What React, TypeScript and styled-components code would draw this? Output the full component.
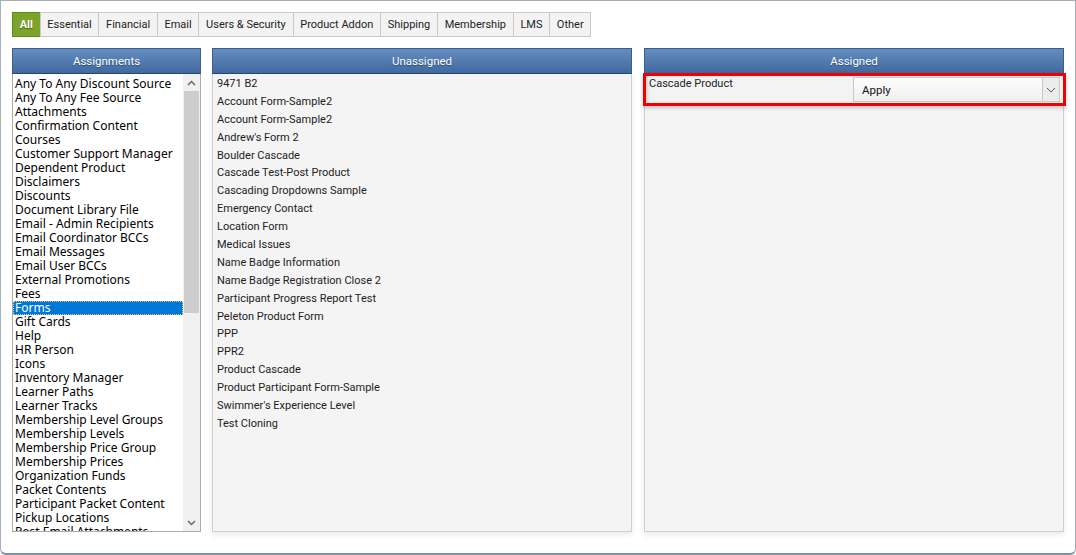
import styled, { createGlobalStyle } from "styled-components";

const tabs = [
  "All",
  "Essential",
  "Financial",
  "Email",
  "Users & Security",
  "Product Addon",
  "Shipping",
  "Membership",
  "LMS",
  "Other",
];

const assignments = [
  "Any To Any Discount Source",
  "Any To Any Fee Source",
  "Attachments",
  "Confirmation Content",
  "Courses",
  "Customer Support Manager",
  "Dependent Product",
  "Disclaimers",
  "Discounts",
  "Document Library File",
  "Email - Admin Recipients",
  "Email Coordinator BCCs",
  "Email Messages",
  "Email User BCCs",
  "External Promotions",
  "Fees",
  "Forms",
  "Gift Cards",
  "Help",
  "HR Person",
  "Icons",
  "Inventory Manager",
  "Learner Paths",
  "Learner Tracks",
  "Membership Level Groups",
  "Membership Levels",
  "Membership Price Group",
  "Membership Prices",
  "Organization Funds",
  "Packet Contents",
  "Participant Packet Content",
  "Pickup Locations",
  "Post Email Attachments",
];

const unassigned = [
  "9471 B2",
  "Account Form-Sample2",
  "Account Form-Sample2",
  "Andrew's Form 2",
  "Boulder Cascade",
  "Cascade Test-Post Product",
  "Cascading Dropdowns Sample",
  "Emergency Contact",
  "Location Form",
  "Medical Issues",
  "Name Badge Information",
  "Name Badge Registration Close 2",
  "Participant Progress Report Test",
  "Peleton Product Form",
  "PPP",
  "PPR2",
  "Product Cascade",
  "Product Participant Form-Sample",
  "Swimmer's Experience Level",
  "Test Cloning",
];

const App = () => {
  return (
    <>
      <GlobalStyle />
      <Window>
        <TabBar>
          {tabs.map((t, i) => (
            <Tab key={t} active={i === 0}>
              {t}
            </Tab>
          ))}
        </TabBar>
        <Columns>
          <Column width={189}>
            <Header>Assignments</Header>
            <ListBox>
              <ListItems>
                {assignments.map((a) => (
                  <ListItem key={a} selected={a === "Forms"}>
                    {a}
                  </ListItem>
                ))}
              </ListItems>
              <ScrollBar>
                <Arrow>
                  <svg width="9" height="6" viewBox="0 0 9 6">
                    <polyline points="1,5 4.5,1.5 8,5" fill="none" stroke="#606060" strokeWidth="1.4" />
                  </svg>
                </Arrow>
                <Track>
                  <Thumb />
                </Track>
                <Arrow>
                  <svg width="9" height="6" viewBox="0 0 9 6">
                    <polyline points="1,1 4.5,4.5 8,1" fill="none" stroke="#606060" strokeWidth="1.4" />
                  </svg>
                </Arrow>
              </ScrollBar>
            </ListBox>
          </Column>
          <Column width={420}>
            <Header>Unassigned</Header>
            <Body>
              {unassigned.map((u, i) => (
                <Entry key={u + i}>{u}</Entry>
              ))}
            </Body>
          </Column>
          <Column width={420}>
            <Header>Assigned</Header>
            <Body>
              <AssignedRow>
                <RowLabel>Cascade Product</RowLabel>
                <SelectBox>
                  <SelectText>Apply</SelectText>
                  <SelectButton>
                    <svg width="10" height="6" viewBox="0 0 10 6">
                      <polyline points="1,1 5,5 9,1" fill="none" stroke="#555" strokeWidth="1" />
                    </svg>
                  </SelectButton>
                </SelectBox>
              </AssignedRow>
            </Body>
          </Column>
        </Columns>
      </Window>
    </>
  );
};

export default App;

const GlobalStyle = createGlobalStyle`
  body {
    margin: 0;
    background: #ffffff;
    font-family: Roboto, "Liberation Sans", sans-serif;
  }
`;

const Window = styled.div`
  width: 1076px;
  height: 555px;
  box-sizing: border-box;
  border: 1px solid #a8abb0;
  border-bottom: 2px solid #7c8ea8;
  border-left-color: #a8b0bc;
  border-radius: 0 0 6px 6px;
  padding: 11px 11px 0 11px;
  background: #fff;
  overflow: hidden;
`;

const TabBar = styled.div`
  display: flex;
  height: 25px;
  margin-bottom: 11px;
`;

const Tab = styled.div<{ active?: boolean }>`
  display: flex;
  align-items: center;
  padding: 0 6.7px;
  font-size: 11px;
  color: ${({ active }) => (active ? "#fff" : "#222")};
  font-weight: ${({ active }) => (active ? 700 : 400)};
  text-shadow: ${({ active }) => (active ? "0 1px 1px #3c5a10" : "none")};
  background: ${({ active }) => (active ? "#7ca42b" : "#f3f3f3")};
  border: 1px solid ${({ active }) => (active ? "#5d8a1c" : "#c9c9c9")};
  margin-left: -1px;
  &:first-child {
    margin-left: 0;
  }
`;

const Columns = styled.div`
  display: flex;
  gap: 11px;
  height: 484px;
`;

const Column = styled.div<{ width: number }>`
  width: ${({ width }) => width}px;
  display: flex;
  flex-direction: column;
  height: 484px;
  & + & + & {
    margin-left: 1px;
  }
`;

const Header = styled.div`
  height: 26px;
  box-sizing: border-box;
  display: flex;
  align-items: center;
  justify-content: center;
  color: #fff;
  font-size: 11.5px;
  text-shadow: 0 1px 1px rgba(0, 0, 0, 0.35);
  background: linear-gradient(#648dc0, #3f69a0);
  border: 1px solid #3a5d8a;
  border-bottom: 1px solid #26466f;
  position: relative;
  z-index: 0;
`;

const ListBox = styled.div`
  flex: 1;
  display: flex;
  border: 1px solid #ababab;
  border-top: none;
  background: #fff;
  overflow: hidden;
`;

const ListItems = styled.div`
  flex: 1;
  padding-top: 3px;
  overflow: hidden;
`;

const ListItem = styled.div<{ selected?: boolean }>`
  height: 14px;
  line-height: 14px;
  padding-left: 2px;
  font-family: "Noto Sans", "DejaVu Sans", sans-serif;
  font-size: 12px;
  white-space: nowrap;
  color: ${({ selected }) => (selected ? "#fff" : "#000")};
  background: ${({ selected }) => (selected ? "#0078d7" : "transparent")};
  outline: ${({ selected }) => (selected ? "1px dotted #f0c080" : "none")};
  outline-offset: -1px;
`;

const ScrollBar = styled.div`
  width: 17px;
  display: flex;
  flex-direction: column;
  background: #f0f0f0;
`;

const Arrow = styled.div`
  height: 17px;
  display: flex;
  align-items: center;
  justify-content: center;
`;

const Track = styled.div`
  flex: 1;
  padding: 0 1px;
`;

const Thumb = styled.div`
  height: 222px;
  background: #cdcdcd;
`;

const Body = styled.div`
  flex: 1;
  background: #f4f4f4;
  border: 1px solid #cfcfcf;
  border-top: none;
  box-shadow: 0 3px 6px rgba(0, 0, 0, 0.08);
  padding-top: 1px;
`;

const Entry = styled.div`
  height: 17.9px;
  line-height: 17.9px;
  padding-left: 4px;
  font-size: 11px;
  color: #222;
`;

const AssignedRow = styled.div`
  position: relative;
  z-index: 1;
  display: flex;
  justify-content: space-between;
  margin: -2px -3px 0 -2px;
  height: 33px;
  box-sizing: border-box;
  border: 3px solid #f00000;
  padding: 1px 3px 0 3px;
  background: #f3f3f3;
  box-shadow: inset 2px 0 3px rgba(0, 0, 0, 0.12), 0 2px 4px rgba(0, 0, 0, 0.2);
`;

const RowLabel = styled.div`
  font-size: 11px;
  color: #222;
  line-height: 14px;
`;

const SelectBox = styled.div`
  display: flex;
  width: 207px;
  height: 25px;
  box-sizing: border-box;
  border: 1px solid #c8c8c8;
  background: linear-gradient(#fdfdfd, #f0f0f0);
`;

const SelectText = styled.div`
  flex: 1;
  display: flex;
  align-items: center;
  padding-left: 8px;
  font-size: 11.5px;
  color: #111;
`;

const SelectButton = styled.div`
  width: 16px;
  display: flex;
  align-items: center;
  justify-content: center;
  border-left: 1px solid #c8c8c8;
  background: #ececec;
`;
